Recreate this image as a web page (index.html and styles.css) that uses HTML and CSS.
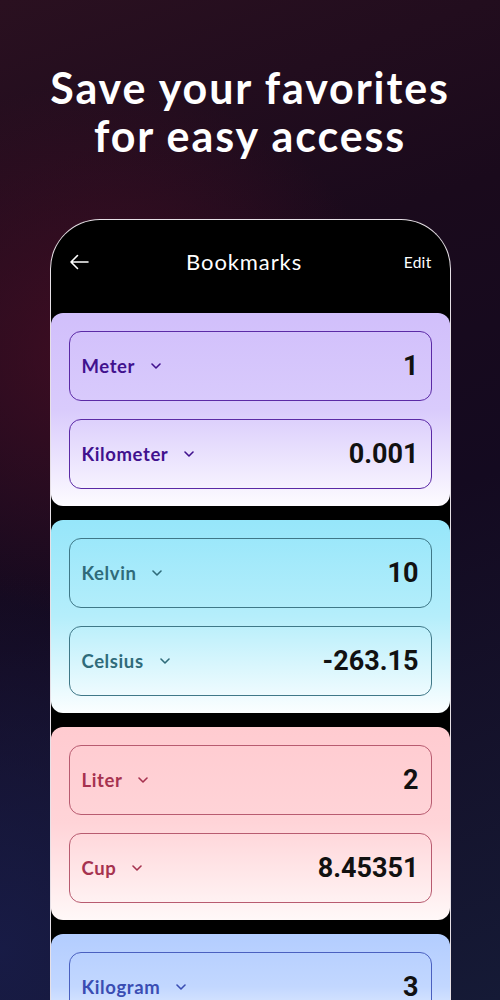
FILE: index.html
```html
<!DOCTYPE html>
<html>
<head>
<meta charset="utf-8">
<link rel="stylesheet" href="styles.css">
</head>
<body>
<div class="page">
  <h1 class="headline">Save your favorites<br>for easy access</h1>
  <div class="phone">
    <div class="topbar">
      <svg class="back" viewBox="0 0 20 16" width="20" height="16"><path d="M19 8H2M8.5 1.5L2 8l6.5 6.5" fill="none" stroke="#fff" stroke-width="1.6" stroke-linecap="round" stroke-linejoin="round"/></svg>
      <div class="title">Bookmarks</div>
      <div class="edit">Edit</div>
    </div>
    <div class="list">
      <div class="card purple">
        <div class="field"><span class="unit">Meter</span><svg class="chev" viewBox="0 0 10 6"><path d="M1 1l4 4 4-4"/></svg><span class="val">1</span></div>
        <div class="field"><span class="unit">Kilometer</span><svg class="chev" viewBox="0 0 10 6"><path d="M1 1l4 4 4-4"/></svg><span class="val">0.001</span></div>
      </div>
      <div class="card cyan">
        <div class="field"><span class="unit">Kelvin</span><svg class="chev" viewBox="0 0 10 6"><path d="M1 1l4 4 4-4"/></svg><span class="val">10</span></div>
        <div class="field"><span class="unit">Celsius</span><svg class="chev" viewBox="0 0 10 6"><path d="M1 1l4 4 4-4"/></svg><span class="val">-263.15</span></div>
      </div>
      <div class="card pink">
        <div class="field"><span class="unit">Liter</span><svg class="chev" viewBox="0 0 10 6"><path d="M1 1l4 4 4-4"/></svg><span class="val">2</span></div>
        <div class="field"><span class="unit">Cup</span><svg class="chev" viewBox="0 0 10 6"><path d="M1 1l4 4 4-4"/></svg><span class="val">8.45351</span></div>
      </div>
      <div class="card blue">
        <div class="field"><span class="unit">Kilogram</span><svg class="chev" viewBox="0 0 10 6"><path d="M1 1l4 4 4-4"/></svg><span class="val">3</span></div>
      </div>
    </div>
  </div>
</div>
</body>
</html>
```
FILE: styles.css
```css
html, body {
  margin: 0;
  padding: 0;
}
body {
  width: 500px;
  height: 1000px;
  overflow: hidden;
  font-family: "Lato", "Open Sans", sans-serif;
  background:
    radial-gradient(ellipse 420px 380px at 20% 35%, rgba(72, 14, 36, 0.8), rgba(72, 14, 36, 0) 70%),
    radial-gradient(ellipse 420px 500px at 0% 95%, rgba(24, 28, 72, 0.9), rgba(24, 28, 72, 0) 75%),
    linear-gradient(160deg, #2a1020 0%, #1a0a1c 30%, #140a20 55%, #151a36 100%);
}
.page {
  display: flex;
  flex-direction: column;
  align-items: center;
}
.headline {
  margin: 64px 0 0;
  color: #fff;
  font-family: "Lato", sans-serif;
  font-weight: 700;
  font-size: 43px;
  line-height: 48px;
  text-align: center;
  letter-spacing: 1.9px;
}
.phone {
  margin-top: 59px;
  width: 399px;
  height: 800px;
  background: #000;
  border: 1.5px solid #e6e0e6;
  border-bottom: none;
  border-radius: 50px 50px 0 0;
  overflow: hidden;
}
.topbar {
  height: 93px;
  display: flex;
  align-items: center;
  padding: 0 18px 10px 18px;
  box-sizing: border-box;
  color: #fff;
}
.back {
  display: block;
  width: 20px;
  height: 16px;
}
.title {
  flex: 1;
  text-align: center;
  font-size: 22px;
  font-weight: 400;
  letter-spacing: 0.9px;
  margin-right: 4px;
}
.edit {
  font-size: 15.5px;
  font-weight: 400;
  letter-spacing: 0.3px;
}
.list {
  display: flex;
  flex-direction: column;
  gap: 14px;
}
.card {
  border-radius: 12px;
  padding: 18px 18px 17px;
  display: flex;
  flex-direction: column;
  gap: 18px;
}
.field {
  height: 70px;
  box-sizing: border-box;
  border: 1.3px solid;
  border-radius: 12px;
  display: flex;
  align-items: center;
  padding: 0 12px 0 12px;
}
.unit {
  font-size: 18.5px;
  font-weight: 700;
  letter-spacing: 0.6px;
}
.chev {
  width: 10px;
  height: 6px;
  margin-left: 16px;
  fill: none;
  stroke: currentColor;
  stroke-width: 1.6;
  stroke-linecap: round;
  stroke-linejoin: round;
}
.val {
  margin-left: auto;
  font-family: "Roboto", sans-serif;
  font-weight: 700;
  font-size: 27px;
  color: #111;
}
.purple {
  background: linear-gradient(180deg, #d1bffb 0%, #d9cbfc 50%, #fdfbff 100%);
}
.purple .field { border-color: #5b2aa6; color: #41118e; }
.cyan {
  background: linear-gradient(180deg, #96e6fa 0%, #b5eefb 50%, #fbfeff 100%);
}
.cyan .field { border-color: #3f7888; color: #2f6b7a; }
.pink {
  background: linear-gradient(180deg, #ffcbd0 0%, #ffd4d8 50%, #fff8f8 100%);
}
.pink .field { border-color: #b85b70; color: #a6324f; }
.blue {
  background: linear-gradient(180deg, #b3cdff 0%, #c2d7ff 50%, #f8fbff 100%);
}
.blue .field { border-color: #4a60c0; color: #3a4db3; }
```
